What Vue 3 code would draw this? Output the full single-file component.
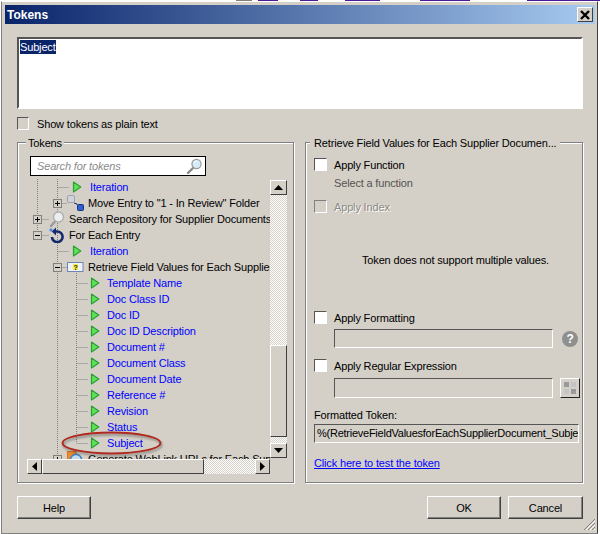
<script setup>
const rows = [
  { label: 'Iteration', depth: 1, icon: 'play', token: true },
  { label: 'Move Entry to "1 - In Review" Folder', depth: 1, icon: 'move', toggle: 'plus' },
  { label: 'Search Repository for Supplier Documents', depth: 0, icon: 'search', toggle: 'plus' },
  { label: 'For Each Entry', depth: 0, icon: 'loop', toggle: 'minus' },
  { label: 'Iteration', depth: 1, icon: 'play', token: true },
  { label: 'Retrieve Field Values for Each Supplier', depth: 1, icon: 'field', toggle: 'minus' },
  ...['Template Name', 'Doc Class ID', 'Doc ID', 'Doc ID Description', 'Document #', 'Document Class', 'Document Date', 'Reference #', 'Revision', 'Status', 'Subject']
    .map((label) => ({ label, depth: 2, icon: 'play', token: true })),
  { label: 'Generate WebLink URLs for Each Supplier', depth: 1, icon: 'globe', toggle: 'plus' }
]
</script>

<template>
  <div class="page">
    <div class="strip"></div>
    <div class="win">
      <div class="title">
        <span class="title-text">Tokens</span>
        <span class="close">
          <svg width="10" height="10" viewBox="0 0 10 10"><path d="M1 1 L9 9 M9 1 L1 9" stroke="#000" stroke-width="2.4" fill="none" /></svg>
        </span>
      </div>
      <div class="body">
        <div class="editor"><span class="sel">Subject</span></div>
        <label class="plain-row"><span class="check"></span><span>Show tokens as plain text</span></label>

        <div class="groups">
          <section class="group left">
            <span class="legend">Tokens</span>
            <div class="search">
              <span class="placeholder">Search for tokens</span>
              <svg width="17" height="17" viewBox="0 0 17 17">
                <path d="M2 15 L7 10" stroke="#8a8a8a" stroke-width="2.4" stroke-linecap="round" />
                <circle cx="10.5" cy="6" r="4.6" fill="#d6ecfa" stroke="#9a9a9a" stroke-width="1.2" />
                <path d="M8 4.5 a3.4 3.4 0 0 1 3-1.5" stroke="#fff" stroke-width="1.2" fill="none" />
              </svg>
            </div>
            <div class="tree">
              <div class="viewport">
                <svg class="guides" width="243" height="280" viewBox="0 0 243 280">
                  <g stroke="#808080" stroke-dasharray="1 1" fill="none">
                    <path d="M10.5 0 V52 M30.5 0 V280 M49.5 88 V264" />
                    <path d="M10.5 40.5 H22 M10.5 56.5 H22 M30.5 8.5 H42 M30.5 24.5 H40 M30.5 72.5 H42 M30.5 88.5 H40" />
                    <path d="M49.5 104.5 H61 M49.5 120.5 H61 M49.5 136.5 H61 M49.5 152.5 H61 M49.5 168.5 H61 M49.5 184.5 H61 M49.5 200.5 H61 M49.5 216.5 H61 M49.5 232.5 H61 M49.5 248.5 H61 M49.5 264.5 H61" />
                  </g>
                </svg>
                <div v-for="(row, i) in rows" :key="i" class="row" :class="'d' + row.depth">
                  <span v-if="row.toggle" class="toggle" :class="row.toggle"></span>
                  <span class="icon">
                    <svg v-if="row.icon === 'play'" width="10" height="12" viewBox="0 0 10 12">
                      <path d="M1.5 1 L8.8 6 L1.5 11 Z" fill="#5ee05a" stroke="#2ba02e" stroke-width="1.2" stroke-linejoin="round" />
                    </svg>
                    <svg v-else-if="row.icon === 'move'" width="18" height="16" viewBox="0 0 18 16">
                      <rect x="0.5" y="0.5" width="7" height="7" rx="1.5" fill="#d0d3dc" stroke="#a0a3ad" />
                      <path d="M7 8 L10 9 V10" stroke="#1e2f6e" fill="none" />
                      <rect x="10.5" y="9.5" width="6" height="6" rx="1" fill="#2f5fd0" stroke="#17307e" />
                    </svg>
                    <svg v-else-if="row.icon === 'search'" width="16" height="16" viewBox="0 0 16 16">
                      <path d="M2 15 L6.5 10" stroke="#9a9a9a" stroke-width="2.4" stroke-linecap="round" />
                      <circle cx="9.5" cy="6" r="5" fill="#ecedee" stroke="#b0b0b0" stroke-width="1.4" />
                    </svg>
                    <svg v-else-if="row.icon === 'loop'" width="16" height="16" viewBox="0 0 16 16">
                      <path d="M6 4.5 H8 A5.3 5.3 0 1 1 3 10" fill="none" stroke="#14296e" stroke-width="2.6" />
                      <path d="M7 0.5 V8.5 L2.8 4.5 Z" fill="#14296e" />
                      <path d="M2 1 L4 3 L2 5 L0 3 Z" fill="#4a8ae8" />
                    </svg>
                    <svg v-else-if="row.icon === 'field'" width="17" height="12" viewBox="0 0 17 12">
                      <rect x="0.5" y="1.5" width="15.5" height="9" fill="#eef2f8" stroke="#6f86b0" />
                      <rect x="6" y="3" width="5" height="6" fill="#f6ea3a" />
                      <text x="8.5" y="8.6" class="qmark">?</text>
                    </svg>
                    <svg v-else width="16" height="16" viewBox="0 0 16 16">
                      <rect x="0" y="0" width="9" height="9" fill="#f08a2c" stroke="#c25f10" />
                      <circle cx="9" cy="9" r="5.6" fill="#c5dcef" stroke="#3f7fbb" stroke-width="1.6" />
                    </svg>
                  </span>
                  <span class="row-label" :class="{ token: row.token }">{{ row.label }}</span>
                </div>
                <svg class="ring" width="104" height="26" viewBox="0 0 104 26">
                  <ellipse cx="51.5" cy="13" rx="49" ry="10.5" fill="none" stroke="#b0281e" stroke-width="1.8" />
                </svg>
              </div>
              <div class="vbar">
                <span class="sb-btn">
                  <svg width="9" height="5" viewBox="0 0 9 5"><path d="M4.5 0 L9 5 H0 Z" /></svg>
                </span>
                <span class="track v1"></span>
                <span class="thumb v2"></span>
                <span class="track v3"></span>
                <span class="sb-btn">
                  <svg width="9" height="5" viewBox="0 0 9 5"><path d="M0 0 H9 L4.5 5 Z" /></svg>
                </span>
              </div>
              <div class="hbar">
                <span class="sb-btn">
                  <svg width="5" height="9" viewBox="0 0 5 9"><path d="M5 0 V9 L0 4.5 Z" /></svg>
                </span>
                <span class="thumb h1"></span>
                <span class="track h2"></span>
                <span class="sb-btn">
                  <svg width="5" height="9" viewBox="0 0 5 9"><path d="M0 0 L5 4.5 L0 9 Z" /></svg>
                </span>
              </div>
            </div>
          </section>

          <section class="group right">
            <span class="legend">Retrieve Field Values for Each Supplier Documen...</span>
            <label class="opt first"><span class="check small"></span><span>Apply Function</span></label>
            <div class="hint">Select a function</div>
            <label class="opt index"><span class="check small off"></span><span class="disabled">Apply Index</span></label>
            <div class="note">Token does not support multiple values.</div>
            <label class="opt fmt"><span class="check small"></span><span>Apply Formatting</span></label>
            <div class="input-row r1">
              <span class="field"></span>
              <svg width="16" height="16" viewBox="0 0 16 16" class="help-ico">
                <circle cx="8" cy="8" r="8" fill="#8f8f8f" />
                <text x="8" y="12.2" class="help-mark">?</text>
              </svg>
            </div>
            <label class="opt regex"><span class="check small"></span><span>Apply Regular Expression</span></label>
            <div class="input-row r2">
              <span class="field"></span>
              <span class="grid-btn">
                <svg width="12" height="12" viewBox="0 0 12 12">
                  <rect x="0" y="0" width="5" height="5" fill="#9a9a9a" />
                  <rect x="7" y="0" width="5" height="5" fill="#c4c4c4" />
                  <rect x="0" y="7" width="5" height="5" fill="#c4c4c4" />
                  <rect x="7" y="7" width="5" height="5" fill="#9a9a9a" />
                </svg>
              </span>
            </div>
            <div class="fmt-label">Formatted Token:</div>
            <div class="token-field"><span>%(RetrieveFieldValuesforEachSupplierDocument_Subje</span></div>
            <a class="link">Click here to test the token</a>
          </section>
        </div>

        <div class="footer">
          <button class="btn">Help</button>
          <div class="footer-right">
            <button class="btn">OK</button>
            <button class="btn wide">Cancel</button>
          </div>
        </div>
      </div>
      <svg class="grip" width="13" height="13" viewBox="0 0 13 13">
        <path d="M12 1 L1 12 M12 5 L5 12 M12 9 L9 12" stroke="#808080" fill="none" />
        <path d="M12 3 L3 12 M12 7 L7 12 M12 11 L11 12" stroke="#fff" fill="none" />
      </svg>
    </div>
  </div>
</template>

<style scoped>
.page {
  width: 600px;
  height: 534px;
  overflow: hidden;
  background: #fff;
  font-family: "Liberation Sans", Arial, sans-serif;
  font-size: 11px;
  letter-spacing: -0.16px;
  color: #000;
}
.strip {
  height: 1px;
  background: linear-gradient(90deg, #fff 0 236px, #808080 236px 252px, #fff 252px 258px, #4a1a96 258px 278px, #fff 278px 300px, #4a1a96 300px 318px, #fff 318px 345px, #4a1a96 345px 380px, #fff 380px 420px, #4a1a96 420px 470px, #fff 470px 527px, #4a1a96 527px);
}
.win {
  position: relative;
  box-sizing: border-box;
  width: 597px;
  height: 533px;
  margin-left: 1px;
  padding: 3px 2px 0 3px;
  background: #d4d0c8;
  border: 1px solid #808080;
  border-top-color: #fff;
  border-right-color: #404040;
}
.title {
  display: flex;
  align-items: center;
  justify-content: space-between;
  height: 19px;
  padding: 0 2px 0 2px;
  background: linear-gradient(90deg, #0a246a, #a6caf0);
}
.title-text {
  color: #fff;
  font-weight: bold;
  font-size: 12px;
  letter-spacing: 0;
}
.close {
  box-sizing: border-box;
  display: flex;
  align-items: center;
  justify-content: center;
  width: 16px;
  height: 15px;
  background: #d4d0c8;
  border: 1px solid;
  border-color: #fff #404040 #404040 #fff;
}
.body {
  padding: 0 12px;
}
.editor {
  box-sizing: border-box;
  height: 72px;
  margin-top: 13px;
  padding: 1px 1px;
  background: #fff;
  border: 2px solid;
  border-color: #555 #fff #fff #555;
  line-height: 14px;
}
.sel {
  display: inline-block;
  background: #0a246a;
  color: #fff;
}
.plain-row {
  display: flex;
  align-items: center;
  gap: 8px;
  height: 13px;
  margin-top: 8px;
}
.check {
  box-sizing: border-box;
  display: block;
  flex: none;
  width: 12px;
  height: 13px;
  background: #d4d0c8;
  border: 1px solid;
  border-color: #555 #fff #fff #555;
}
.check.small {
  width: 13px;
  height: 13px;
  background: #fff;
}
.check.off {
  background: #d4d0c8;
  border-color: #808080 #fff #fff #808080;
}
.groups {
  display: flex;
  gap: 11px;
  margin-top: 12px;
}
.group {
  position: relative;
  box-sizing: border-box;
  height: 341px;
  border: 1px solid #808080;
  box-shadow: 1px 1px 0 #fff, inset 1px 1px 0 #fff;
}
.left {
  width: 277px;
  padding: 13px 0 0 12px;
}
.right {
  width: 278px;
  padding: 15px 0 0 8px;
}
.legend {
  position: absolute;
  top: -7px;
  left: 8px;
  padding: 0 2px;
  line-height: 14px;
  background: #d4d0c8;
  white-space: nowrap;
}
.right .legend {
  left: 4px;
  padding: 0 4px;
}
.search {
  box-sizing: border-box;
  display: flex;
  align-items: center;
  justify-content: space-between;
  width: 176px;
  height: 20px;
  padding: 0 2px 0 6px;
  background: #fff;
  border: 1px solid #000;
}
.placeholder {
  color: #8a8a8a;
  font-style: italic;
}
.tree {
  display: grid;
  grid-template-columns: 243px 17px;
  grid-template-rows: 280px 15px;
  margin: 3px 0 0 -3px;
  width: 260px;
}
.viewport {
  position: relative;
  overflow: hidden;
}
.guides {
  position: absolute;
  top: 0;
  left: 0;
}
.row {
  position: relative;
  display: flex;
  align-items: center;
  height: 16px;
  white-space: nowrap;
}
.row.d0 { padding-left: 6px; }
.row.d1 { padding-left: 26px; }
.row.d2 { padding-left: 63px; }
.toggle {
  position: relative;
  box-sizing: border-box;
  flex: none;
  width: 9px;
  height: 9px;
  background: #d4d0c8;
  border: 1px solid #808080;
}
.toggle::before {
  content: "";
  position: absolute;
  left: 1px;
  top: 3px;
  width: 5px;
  height: 1px;
  background: #000;
}
.toggle.plus::after {
  content: "";
  position: absolute;
  left: 3px;
  top: 1px;
  width: 1px;
  height: 5px;
  background: #000;
}
.icon {
  display: flex;
  align-items: center;
  flex: none;
}
.d0 .icon { width: 20px; margin-left: 7px; }
.d1 .icon { width: 21px; margin-left: 5px; }
.d1 .icon:first-child { margin-left: 19px; width: 18px; }
.d2 .icon { width: 17px; }
.row-label {
  flex: none;
}
.token {
  color: #0000ff;
}
.qmark {
  font: bold 7px "Liberation Sans", sans-serif;
  text-anchor: middle;
  fill: #1a1a1a;
}
.ring {
  position: absolute;
  left: 33px;
  top: 251px;
  filter: drop-shadow(1px 2px 1px rgba(70, 70, 70, 0.55));
}
.vbar {
  grid-row: 1 / 3;
  grid-column: 2;
  display: flex;
  flex-direction: column;
  padding-top: 1px;
}
.hbar {
  display: flex;
}
.sb-btn {
  box-sizing: border-box;
  display: flex;
  align-items: center;
  justify-content: center;
  flex: none;
  width: 17px;
  height: 15px;
  background: #d4d0c8;
  border: 1px solid;
  border-color: #fff #404040 #404040 #fff;
}
.hbar .sb-btn {
  width: 15px;
}
.sb-btn svg {
  fill: #000;
}
.track {
  display: block;
  background: repeating-conic-gradient(#d4d0c8 0 25%, #fff 0 50%) 0 0 / 2px 2px;
}
.thumb {
  box-sizing: border-box;
  display: block;
  background: #d4d0c8;
  border: 1px solid;
  border-color: #fff #404040 #404040 #fff;
}
.v1 { height: 150px; }
.v2 { height: 92px; }
.v3 { height: 6px; }
.h1 { width: 162px; }
.h2 { width: 51px; }
.opt {
  display: flex;
  align-items: center;
  gap: 7px;
  height: 13px;
}
.index { margin-top: 10px; }
.fmt { margin-top: 44px; }
.regex { margin-top: 11px; }
.disabled {
  color: #8c8a84;
  text-shadow: 1px 1px 0 #fff;
}
.hint {
  height: 14px;
  line-height: 14px;
  margin: 5px 0 0 20px;
  color: #55534f;
}
.note {
  height: 14px;
  line-height: 14px;
  margin-top: 40px;
  padding-left: 48px;
}
.input-row {
  display: flex;
  align-items: center;
  margin: 5px 0 0 20px;
}
.r1 { gap: 9px; height: 19px; }
.r2 { gap: 7px; height: 20px; margin-top: 6px; }
.field {
  box-sizing: border-box;
  display: block;
  width: 219px;
  height: 100%;
  border: 1px solid;
  border-color: #555 #fff #fff #555;
}
.help-mark {
  font: bold 12px "Liberation Sans", sans-serif;
  text-anchor: middle;
  fill: #fff;
}
.grid-btn {
  box-sizing: border-box;
  display: flex;
  align-items: center;
  justify-content: center;
  width: 20px;
  height: 20px;
  background: #d4d0c8;
  border: 1px solid;
  border-color: #fff #222 #222 #fff;
}
.fmt-label {
  height: 14px;
  line-height: 14px;
  margin-top: 10px;
}
.token-field {
  box-sizing: border-box;
  width: 265px;
  height: 19px;
  margin-top: 2px;
  padding-left: 2px;
  line-height: 16px;
  letter-spacing: -0.25px;
  overflow: hidden;
  white-space: nowrap;
  border: 1px solid;
  border-color: #555 #fff #fff #555;
}
.link {
  display: block;
  height: 14px;
  line-height: 14px;
  margin-top: 13px;
  color: #0000ff;
  text-decoration: underline;
}
.footer {
  display: flex;
  justify-content: space-between;
  margin-top: 13px;
}
.footer-right {
  display: flex;
  gap: 7px;
}
.btn {
  box-sizing: border-box;
  width: 74px;
  height: 23px;
  padding: 0;
  font: 11px "Liberation Sans", Arial, sans-serif;
  letter-spacing: -0.16px;
  color: #000;
  background: #d4d0c8;
  border: 1px solid;
  border-color: #fff #404040 #404040 #fff;
  box-shadow: inset -1px -1px 0 #808080;
}
.btn.wide {
  width: 75px;
}
.grip {
  position: absolute;
  right: 1px;
  bottom: 2px;
}
</style>
